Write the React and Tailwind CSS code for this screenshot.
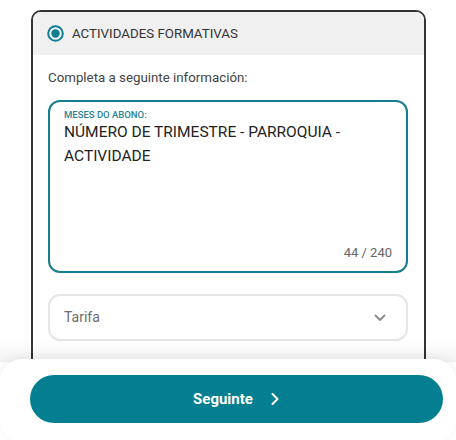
import React from "react";

export default function App() {
  const font = { fontFamily: "Roboto, 'Noto Sans', sans-serif" };
  return (
    <div className="relative h-[440px] w-[456px] overflow-hidden bg-white" style={font}>
      <div className="ml-[31px] mt-[10px] w-[395px] h-[480px] rounded-[10px] border-[2.5px] border-[#333333] overflow-hidden bg-white">
        <div className="flex h-[43px] items-center bg-[#f0f0f0] pl-[14px]">
          <svg width="17" height="17" viewBox="0 0 17 17" className="shrink-0">
            <circle cx="8.5" cy="8.5" r="7.3" fill="none" stroke="#0e7d8f" strokeWidth="2" />
            <circle cx="8.5" cy="8.5" r="4.2" fill="#0e7d8f" />
          </svg>
          <span className="ml-[8px] text-[13.3px] text-[#333]">ACTIVIDADES FORMATIVAS</span>
        </div>
        <div className="pl-[15px] pr-[16px]">
          <p className="mt-[13px] text-[13.3px] leading-[20px] text-[#444]">Completa a seguinte información:</p>
          <div className="mt-[12px] flex h-[173px] flex-col rounded-[12px] border-2 border-[#157d8d] px-[14px] pt-[7px] pb-[10px]">
            <div className="text-[9.5px] leading-[12px] font-medium text-[#2a8296]">MESES DO ABONO:</div>
            <div className="-mt-[1px] text-[15.5px] leading-[24px] text-[#222]">
              NÚMERO DE TRIMESTRE - PARROQUIA - ACTIVIDADE
            </div>
            <div className="mt-auto text-right text-[13px] leading-[16px] text-[#666]">44 / 240</div>
          </div>
          <div className="mt-[21px] flex h-[47px] items-center justify-between rounded-[12px] border-2 border-[#e6e6e6] pl-[14px] pr-[20px]">
            <span className="text-[14px] text-[#6d6d6d]">Tarifa</span>
            <svg width="12" height="8" viewBox="0 0 12 8">
              <path d="M1.5 1.5 L6 6 L10.5 1.5" fill="none" stroke="#8a8a8a" strokeWidth="1.8" strokeLinecap="round" strokeLinejoin="round" />
            </svg>
          </div>
        </div>
      </div>
      <div className="absolute left-0 right-0 top-[338px] h-[24px] bg-gradient-to-b from-transparent to-black/[0.05]" />
      <div className="absolute left-0 top-[359px] h-[83px] w-[456px] rounded-[22px] bg-white shadow-[0_-2px_10px_rgba(0,0,0,0.06)]">
        <button className="ml-[30px] mt-[16px] flex h-[48px] w-[413px] items-center justify-center rounded-full bg-[#047f92] text-white">
          <span className="text-[15px] font-bold">Seguinte</span>
          <svg width="10" height="14" viewBox="0 0 10 14" className="ml-[17px]">
            <path d="M2.5 2 L7.5 7 L2.5 12" fill="none" stroke="white" strokeWidth="2" strokeLinecap="round" strokeLinejoin="round" />
          </svg>
        </button>
      </div>
    </div>
  );
}
